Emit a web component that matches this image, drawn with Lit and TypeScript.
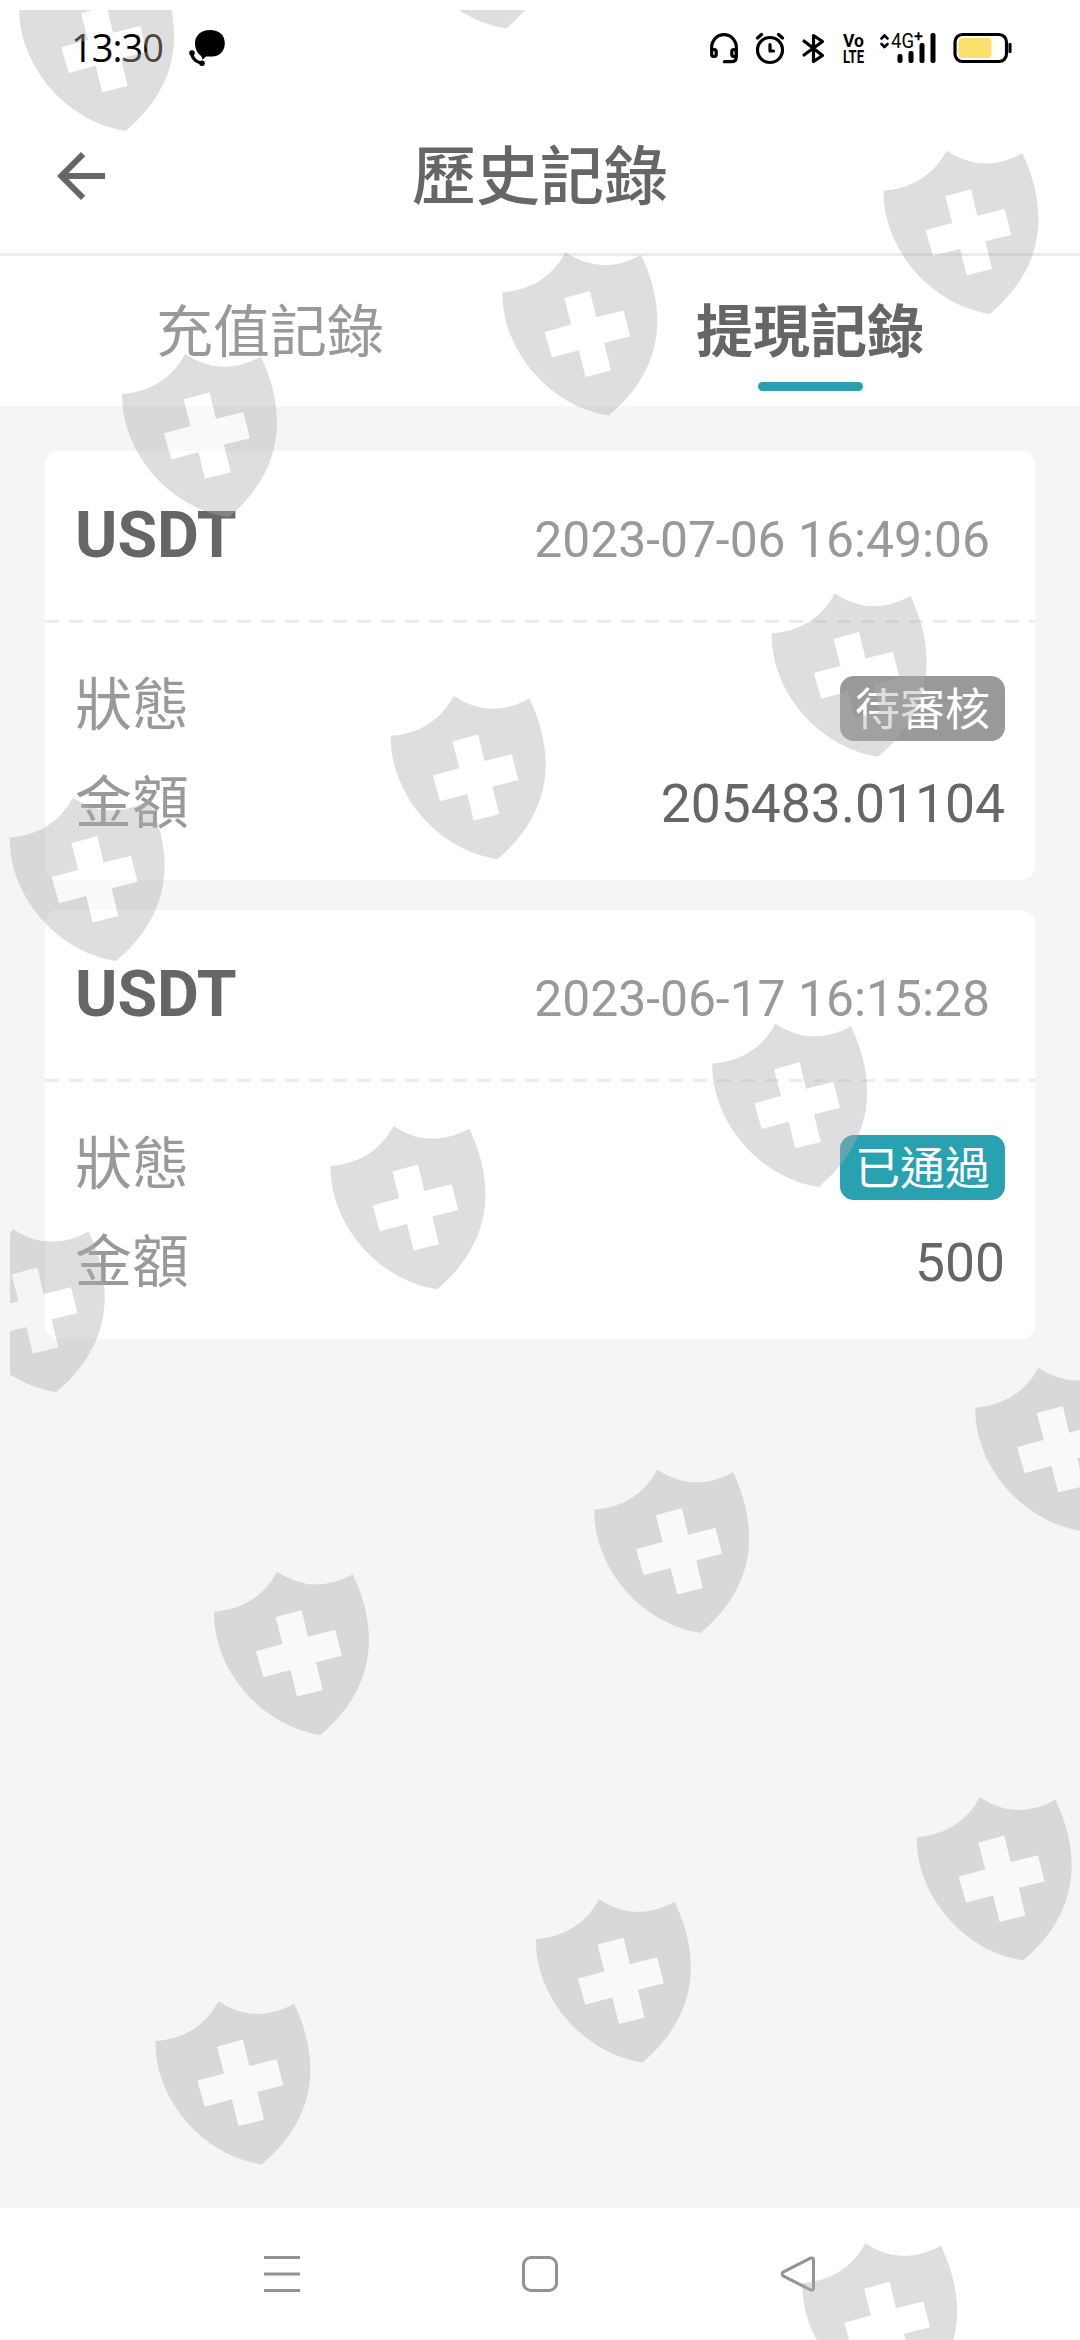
import { LitElement, html, svg, css, nothing } from 'lit';
import { customElement, property } from 'lit/decorators.js';
import { classMap } from 'lit/directives/class-map.js';

interface RecordItem {
  coin: string;
  time: string;
  status: string;
  passed: boolean;
  amount: string;
}

const RECORDS: RecordItem[] = [
  { coin: 'USDT', time: '2023-07-06 16:49:06', status: '待審核', passed: false, amount: '205483.01104' },
  { coin: 'USDT', time: '2023-06-17 16:15:28', status: '已通過', passed: true, amount: '500' },
];

interface Shield {
  x: number;
  y: number;
  // light cross, for the shields that lie on the grey page
  light?: boolean;
}

const SHIELDS: Shield[] = [
  { x: 5, y: -42 },
  { x: 385.5, y: -144.5 },
  { x: 107.8, y: 344.3, light: true },
  { x: 488.2, y: 242.6 },
  { x: 869.3, y: 141 },
  { x: -4.5, y: 788, light: true },
  { x: 376.5, y: 686.3 },
  { x: 757.5, y: 583.8 },
  { x: -64.4, y: 1219.2 },
  { x: 316.3, y: 1116.3 },
  { x: 698, y: 1014 },
  { x: 199.8, y: 1562, light: true },
  { x: 580, y: 1460, light: true },
  { x: 961, y: 1358, light: true },
  { x: 141.2, y: 1991.5, light: true },
  { x: 521.7, y: 1889.5, light: true },
  { x: 902.5, y: 1787.5, light: true },
  { x: 788, y: 2233.5 },
];

const CROSS =
  'M76 55.300L101.700 48.300L108 74.700L135.300 68L142 93.700L116 100.300L122.700 128L97.300 134.300L90.700 107.700L63.700 115L56.300 89.300L83 82z';

@customElement('status-bar')
export class StatusBar extends LitElement {
  static styles = css`
    :host {
      display: flex;
      align-items: center;
      height: 96px;
      box-sizing: border-box;
      padding: 0 68px 0 71px;
      color: #000;
    }
    .clock {
      font: 400 38px/40px 'Open Sans', sans-serif;
      letter-spacing: -1px;
      width: 117px;
      padding-bottom: 3px;
    }
    .icons {
      margin-left: auto;
    }
    svg {
      display: block;
    }
    .line {
      fill: none;
      stroke: #000;
      stroke-width: 3.2;
      stroke-linecap: round;
      stroke-linejoin: round;
    }
    .thin {
      stroke-width: 2.6;
    }
    .volte {
      font: 700 19px Roboto, sans-serif;
    }
    .net {
      font: 400 20px Roboto, sans-serif;
    }
  `;

  render() {
    return html`
      <span class="clock">13:30</span>
      <svg width="38" height="38" viewBox="188 29 38 38">
        <path d="M210 30c9 0 14.800 5 14.800 13s-4.800 13.500-12.800 13.500h-6l-3.500 3.200c-.500-3-1.500-4-4-6C191 43 196 30 210 30z" />
        <path class="line" d="M191.500 53.500q1.500 8 11 10" />
        <circle cx="192" cy="53" r="2.800" />
        <circle cx="202" cy="63.300" r="2.800" />
      </svg>
      <svg class="icons" width="306" height="40" viewBox="706 28 306 40">
        <path class="line" d="M711.700 50V47a12.300 12.300 0 0 1 24.600 0V57q0 4.700-5 4.700h-7" />
        <rect class="line" x="711.700" y="49.500" width="4.500" height="7" rx="2" />
        <rect class="line" x="731.800" y="49.500" width="4.500" height="7" rx="2" />
        <circle class="line" cx="770" cy="50" r="12.500" />
        <path class="line" d="M770 44.500v6.500h3.500M757.500 38l4-3.500M782.500 38l-4-3.500" />
        <path class="line" d="M804 41l18.500 14.500-9 6V35.500l9 6L804 55" />
        <text class="volte"><tspan x="843" y="46.500" textLength="21" lengthAdjust="spacingAndGlyphs">Vo</tspan><tspan x="843" y="63" textLength="21" lengthAdjust="spacingAndGlyphs">LTE</tspan></text>
        <path class="line thin" d="M881.500 38.500l3-3 3 3M881.500 44l3 3 3-3" />
        <text class="net" x="891" y="48" textLength="23" lengthAdjust="spacingAndGlyphs">4G</text>
        <path d="M914.500 35.200h8v2h-8zM917.500 32.200h2v8h-2z" />
        <rect x="897.500" y="54" width="5" height="9" rx="2" />
        <rect x="908.500" y="51" width="5" height="12" rx="2" />
        <rect x="919.500" y="43" width="5" height="20" rx="2" />
        <rect x="930.500" y="33" width="5" height="30" rx="2" />
        <rect class="line" x="955" y="34.500" width="51.500" height="27" rx="7.500" />
        <rect x="958.500" y="38" width="33" height="20" rx="4" fill="#fddf6d" />
        <rect x="1008.500" y="43" width="3" height="10" rx="1" />
      </svg>
    `;
  }
}

@customElement('record-card')
export class RecordCard extends LitElement {
  @property({ attribute: false }) item!: RecordItem;

  static styles = css`
    :host {
      display: flex;
      flex-direction: column;
      height: 429px;
      border-radius: 14px;
      background: #fff;
      overflow: hidden;
      color: #666;
    }
    .head {
      display: flex;
      justify-content: space-between;
      align-items: baseline;
      height: 169px;
      box-sizing: border-box;
      padding: 46px 45px 0 30px;
    }
    .coin {
      font-size: 64.4px;
      line-height: 76px;
      font-weight: 700;
    }
    .time {
      font-size: 49.8px;
      color: #999;
    }
    .dash {
      height: 3px;
      background: repeating-linear-gradient(90deg, #ececec 0 14px, transparent 14px 24px);
    }
    .body {
      padding: 32px 30px 0;
    }
    .row {
      display: flex;
      justify-content: space-between;
      align-items: center;
      height: 98px;
    }
    .label {
      font-size: 57px;
      line-height: 80px;
      padding-top: 4px;
      color: #999;
    }
    .value {
      font-size: 53.4px;
      padding-top: 2px;
    }
    .badge {
      padding: 0 15px;
      margin-top: 9px;
      height: 65px;
      border-radius: 14px;
      font-size: 45px;
      line-height: 69px;
      color: #fff;
      background: #999;
    }
    .badge.passed {
      background: #2aa1b1;
    }
  `;

  render() {
    const { coin, time, status, passed, amount } = this.item;
    return html`
      <div class="head">
        <span class="coin">${coin}</span>
        <span class="time">${time}</span>
      </div>
      <div class="dash"></div>
      <div class="body">
        <div class="row">
          <span class="label">狀態</span>
          <span class=${classMap({ badge: true, passed })}>${status}</span>
        </div>
        <div class="row">
          <span class="label">金額</span>
          <span class="value">${amount}</span>
        </div>
      </div>
    `;
  }
}

@customElement('app-root')
export class AppRoot extends LitElement {
  static styles = css`
    :host {
      display: flex;
      flex-direction: column;
      position: relative;
      width: 1080px;
      height: 2340px;
      overflow: hidden;
      background: #f5f5f5;
      font-family: Roboto, 'Noto Sans CJK TC', sans-serif;
      color: #666;
    }
    status-bar,
    header,
    .tabs,
    nav {
      background: #fff;
    }
    header {
      display: grid;
      grid-template-columns: 150px 1fr 150px;
      align-items: center;
      height: 160px;
      box-sizing: border-box;
      border-bottom: 3px solid #ebebeb;
    }
    .back {
      margin: 2px 0 0 45px;
      fill: #666;
    }
    h1 {
      margin: 0;
      padding-top: 7px;
      text-align: center;
      font-size: 64px;
      line-height: 90px;
      font-weight: 500;
    }
    .tabs {
      display: grid;
      grid-template-columns: 1fr 1fr;
      height: 150px;
    }
    .tab {
      display: flex;
      flex-direction: column;
      align-items: center;
      padding-top: 35px;
      font-size: 57px;
      line-height: 84px;
      color: #999;
    }
    .tab.active {
      font-weight: 700;
      color: #666;
    }
    .tab.active::after {
      content: '';
      width: 105px;
      height: 9px;
      margin-top: 7px;
      border-radius: 5px;
      background: #2aa1b1;
    }
    main {
      flex: 1;
      display: flex;
      flex-direction: column;
      gap: 30px;
      padding: 45px;
    }
    nav {
      display: grid;
      grid-template-columns: repeat(3, 258px);
      justify-content: center;
      justify-items: center;
      align-items: center;
      height: 132px;
    }
    nav svg {
      fill: none;
      stroke: #939393;
      stroke-width: 3;
      stroke-linejoin: round;
    }
    .watermark {
      position: absolute;
      inset: 0;
      pointer-events: none;
      fill: #afafaf;
      opacity: 0.4;
    }
    .cross {
      fill: #fff;
    }
  `;

  render() {
    return html`
      <status-bar></status-bar>
      <header>
        <svg class="back" width="72" height="72" viewBox="0 0 24 24">
          <path d="M20 11H7.830l5.590-5.590L12 4l-8 8 8 8 1.410-1.410L7.830 13H20z" />
        </svg>
        <h1>歷史記錄</h1>
      </header>
      <div class="tabs">
        <div class="tab">充值記錄</div>
        <div class="tab active">提現記錄</div>
      </div>
      <main>${RECORDS.map((r) => html`<record-card .item=${r}></record-card>`)}</main>
      <nav>
        <svg width="36" height="36"><path d="M0 1.500h36M0 18h36M0 34.500h36" /></svg>
        <svg width="36" height="36"><rect x="1.500" y="1.500" width="33" height="33" rx="7.500" /></svg>
        <svg width="36" height="36">
          <path d="M30.500 2.200L3.500 15.800q-3 2.200 0 4.400L30.500 33.800q3 1 3-1.500V3.700q0-2.500-3-1.500z" />
        </svg>
      </nav>
      ${this.renderWatermark()}
    `;
  }

  renderWatermark() {
    return html`
      <svg class="watermark" width="1080" height="2340" viewBox="0 0 1080 2340">
        <defs>
          <path
            id="shield"
            fill-rule="evenodd"
            d="M14.300 49.700Q58 46 77.300 9.700Q114 34 153 12.300C181 72 174 128 120.700 173C58 163 13 104 14.300 49.700z ${CROSS}"
          />
          <path id="cross" d=${CROSS} />
          <clipPath id="frame"><rect x="10" y="10" width="1070" height="2330" /></clipPath>
        </defs>
        <g clip-path="url(#frame)">
          ${SHIELDS.map(
            ({ x, y, light }) => svg`
              <use href="#shield" x=${x} y=${y} />
              ${light ? svg`<use class="cross" href="#cross" x=${x} y=${y} />` : nothing}
            `
          )}
        </g>
      </svg>
    `;
  }
}
